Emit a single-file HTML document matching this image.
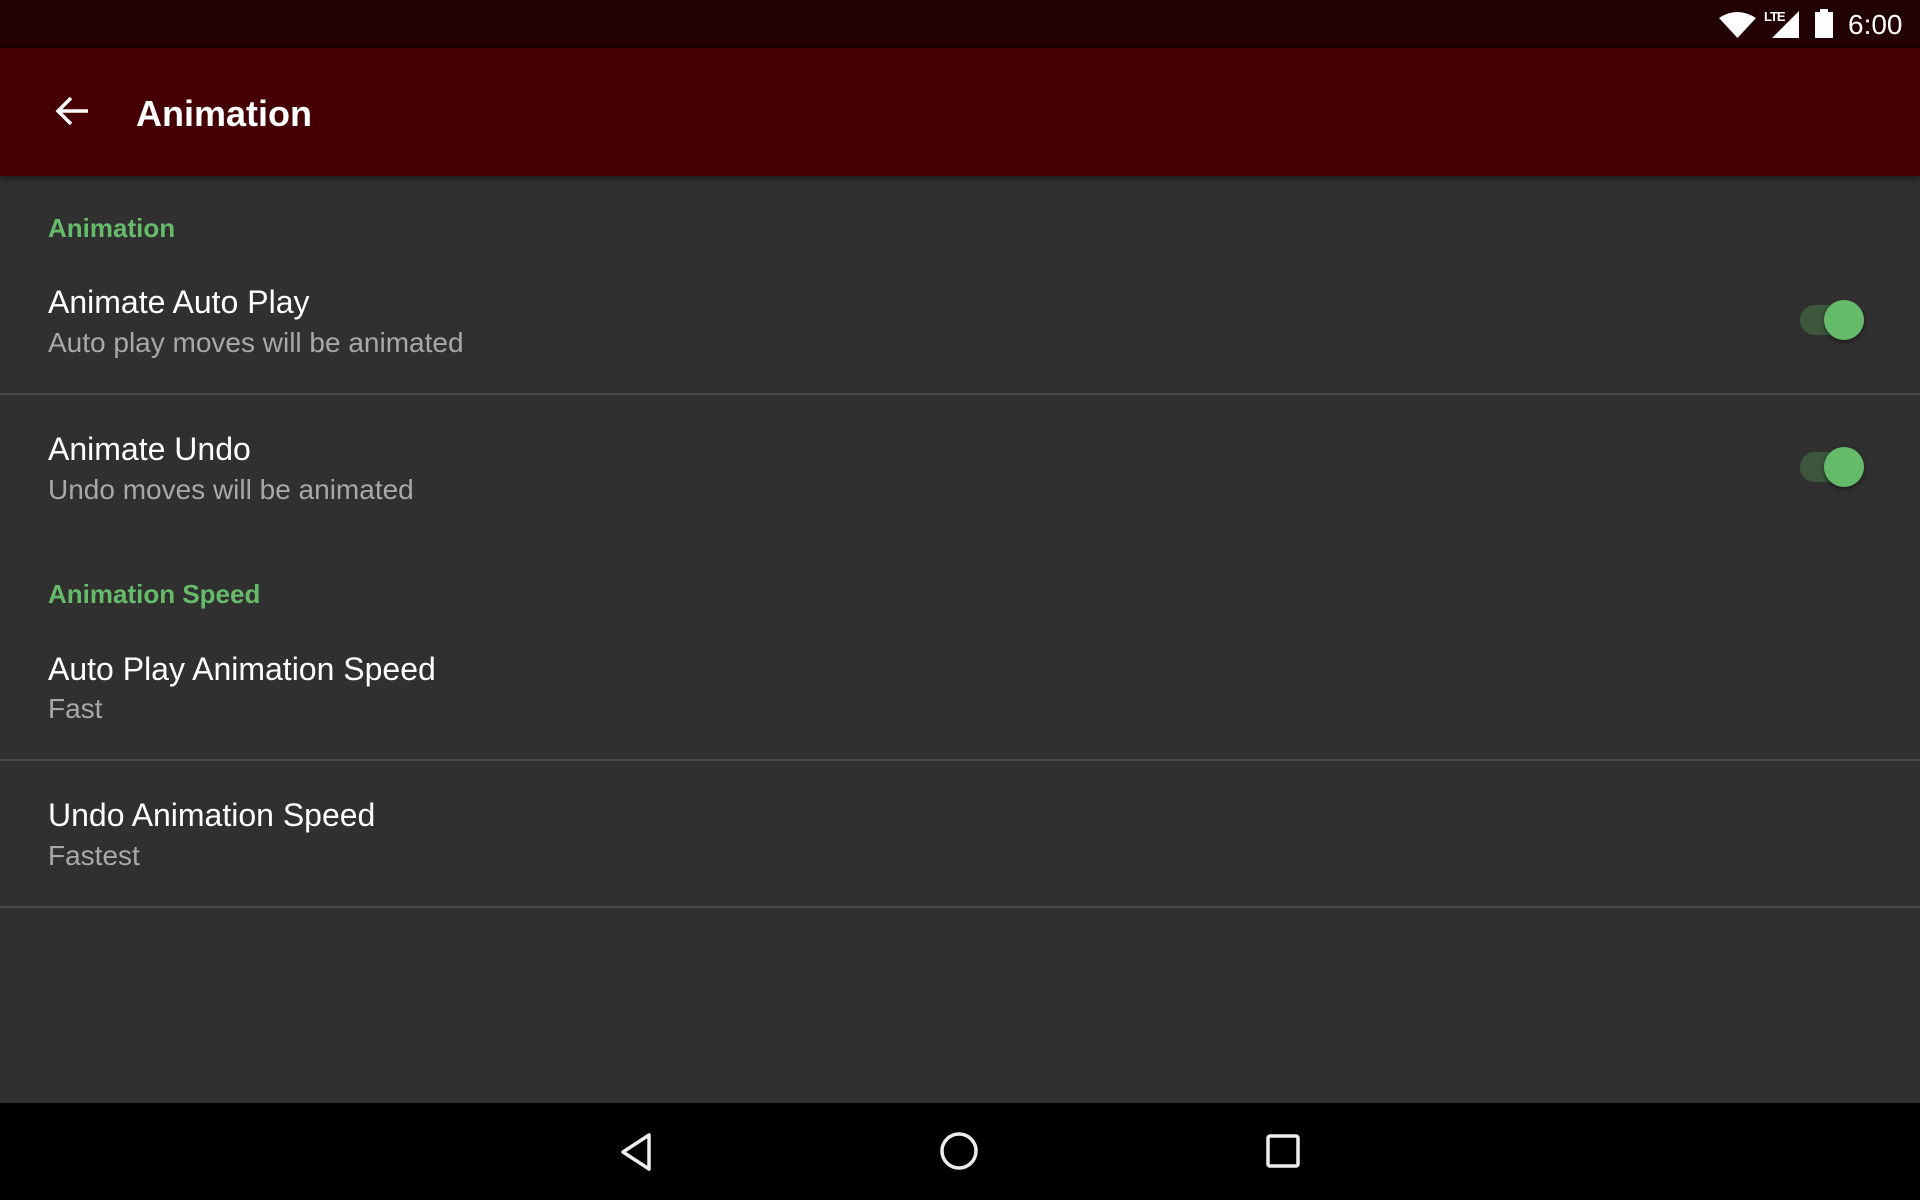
<!DOCTYPE html>
<html><head><meta charset="utf-8"><style>
*{margin:0;padding:0;box-sizing:border-box}
body{width:1920px;height:1200px;overflow:hidden;background:#303030;font-family:"Liberation Sans",sans-serif;position:relative}
.abs{position:absolute}
.status{left:0;top:0;width:1920px;height:48px;background:#220003}
.bar{left:0;top:48px;width:1920px;height:128px;background:#440003;box-shadow:0 3px 6px rgba(0,0,0,.4)}
.title{left:136px;top:92px;color:#fff;font-size:36px;font-weight:bold;line-height:44px}
.hdr{left:48px;color:#66bb6a;font-size:26px;font-weight:bold;line-height:30px}
.t{left:48px;color:#fff;font-size:32px;line-height:36px}
.s{left:48px;color:#a8a8a8;font-size:28px;line-height:32px}
.div{left:0;width:1920px;height:2px;background:#474747}
.track{left:1800px;width:64px;height:30px;border-radius:15px;background:#3d573f}
.thumb{left:1824px;width:40px;height:40px;border-radius:50%;background:#66bb6a;box-shadow:0 2px 4px rgba(0,0,0,.5)}
.nav{left:0;top:1103px;width:1920px;height:97px;background:#000}
</style></head><body>
<div class="abs status"></div>
<svg class="abs" style="left:1718px;top:10px" width="40" height="30" viewBox="0 0 40 30"><path d="M1 8 Q19 -4 38 8 L19.5 28 Z" fill="#fff"/></svg>
<div class="abs" style="left:1764px;top:9px;color:#fff;font-size:13px;font-weight:bold;letter-spacing:-1px">LTE</div>
<svg class="abs" style="left:1768px;top:10px" width="32" height="30" viewBox="0 0 32 30"><path d="M31 1 L31 28 L4 28 Z" fill="#fff"/></svg>
<div class="abs" style="left:1815px;top:12px;width:18px;height:26px;background:#fff"></div>
<div class="abs" style="left:1820px;top:9px;width:8px;height:4px;background:#fff"></div>
<div class="abs" style="left:1848px;top:8px;color:#fff;font-size:28px;line-height:34px">6:00</div>
<div class="abs bar"></div>
<svg class="abs" style="left:54px;top:95px" width="36" height="32" viewBox="0 0 36 32"><path d="M34 16 H4 M17 3 L4 16 L17 29" stroke="#fff" stroke-width="3.5" fill="none"/></svg>
<div class="abs title">Animation</div>

<div class="abs hdr" style="top:213px">Animation</div>
<div class="abs t" style="top:284px">Animate Auto Play</div>
<div class="abs s" style="top:327px">Auto play moves will be animated</div>
<div class="abs track" style="top:305px"></div><div class="abs thumb" style="top:300px"></div>
<div class="abs div" style="top:393px"></div>
<div class="abs t" style="top:431px">Animate Undo</div>
<div class="abs s" style="top:474px">Undo moves will be animated</div>
<div class="abs track" style="top:452px"></div><div class="abs thumb" style="top:447px"></div>

<div class="abs hdr" style="top:579px">Animation Speed</div>
<div class="abs t" style="top:651px">Auto Play Animation Speed</div>
<div class="abs s" style="top:693px">Fast</div>
<div class="abs div" style="top:759px"></div>
<div class="abs t" style="top:797px">Undo Animation Speed</div>
<div class="abs s" style="top:840px">Fastest</div>
<div class="abs div" style="top:906px"></div>

<div class="abs nav"></div>
<svg class="abs" style="left:618px;top:1132px" width="36" height="40" viewBox="0 0 36 40"><path d="M31 3 L31 37 L5 20 Z" stroke="#eee" stroke-width="3.5" fill="none" stroke-linejoin="round"/></svg>
<svg class="abs" style="left:939px;top:1131px" width="40" height="40" viewBox="0 0 40 40"><circle cx="20" cy="20" r="17" stroke="#eee" stroke-width="3.5" fill="none"/></svg>
<svg class="abs" style="left:1266px;top:1134px" width="36" height="36" viewBox="0 0 36 36"><rect x="2" y="2" width="30" height="30" rx="2" stroke="#eee" stroke-width="3.5" fill="none"/></svg>
</body></html>
